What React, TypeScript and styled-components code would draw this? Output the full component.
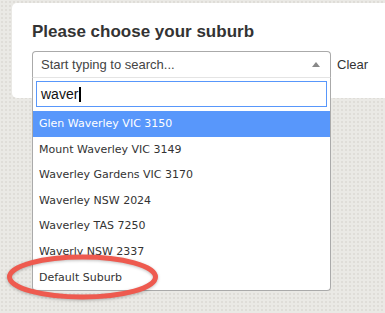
import React from 'react';
import styled, { createGlobalStyle } from 'styled-components';

const GlobalStyle = createGlobalStyle`
  html, body {
    margin: 0;
    padding: 0;
  }
  body {
    background-color: #eae9e5;
    background-image: radial-gradient(circle, #dfddd8 1px, transparent 1.2px);
    background-size: 4px 4px;
    font-family: "Liberation Sans", Arial, sans-serif;
    color: #333;
  }
`;

const suburbs = [
  'Glen Waverley VIC 3150',
  'Mount Waverley VIC 3149',
  'Waverley Gardens VIC 3170',
  'Waverley NSW 2024',
  'Waverley TAS 7250',
  'Waverly NSW 2337',
  'Default Suburb',
];

const Page = () => (
  <Wrapper>
    <Card>
      <Title>Please choose your suburb</Title>
      <SelectRow>
        <Select>
          <Chosen>
            <Placeholder>Start typing to search...</Placeholder>
            <Arrow />
          </Chosen>
          <Drop>
            <SearchBox>
              <SearchInput>
                waver<Caret />
              </SearchInput>
            </SearchBox>
            <Results>
              {suburbs.map((s, i) => (
                <Option key={s} active={i === 0}>
                  {s}
                </Option>
              ))}
            </Results>
          </Drop>
        </Select>
        <ClearLink>Clear</ClearLink>
      </SelectRow>
    </Card>
    {/* red highlight drawn over the last option */}
    <Circle width="170" height="54" viewBox="0 0 170 54">
      <ellipse cx="77.5" cy="25" rx="73" ry="20" fill="none" stroke="#ee5a4f" strokeWidth="5" />
    </Circle>
  </Wrapper>
);

const Wrapper = styled.div`
  position: relative;
  height: 313px;
  padding: 3px 0 0 12px;
  box-sizing: border-box;
  overflow: hidden;
`;

const Card = styled.div`
  background: #fff;
  border-radius: 5px 0 0 5px;
  height: 95px;
  padding: 19px 0 0 20px;
  box-sizing: border-box;
`;

const Title = styled.h2`
  margin: 0;
  font-size: 17px;
  line-height: 20px;
  font-weight: bold;
  color: #333;
`;

const SelectRow = styled.div`
  display: flex;
  align-items: center;
  gap: 6px;
  margin-top: 9px;
`;

const Select = styled.div`
  position: relative;
  width: 299px;
`;

const Chosen = styled.div`
  display: flex;
  align-items: center;
  justify-content: space-between;
  height: 27px;
  padding: 0 8px 0 8px;
  border: 1px solid #aaa;
  border-bottom-color: #e4e4e4;
  border-radius: 4px 4px 0 0;
  background: #fff;
  box-sizing: border-box;
`;

const Placeholder = styled.span`
  font-size: 13px;
  color: #444;
`;

const Arrow = styled.span`
  width: 0;
  height: 0;
  border-left: 4px solid transparent;
  border-right: 4px solid transparent;
  border-bottom: 5px solid #888;
  margin-right: 2px;
`;

const Drop = styled.div`
  position: absolute;
  top: 27px;
  left: 0;
  right: 0;
  background: #fff;
  border: 1px solid #aaa;
  border-top: none;
  border-radius: 0 0 4px 4px;
  z-index: 2;
`;

const SearchBox = styled.div`
  padding: 3px 3px 4px 3px;
`;

const SearchInput = styled.div`
  display: flex;
  align-items: center;
  height: 26px;
  padding: 0 4px;
  border: 1px solid #5897fb;
  box-sizing: border-box;
  font-size: 14px;
  color: #111;
`;

const Caret = styled.span`
  display: inline-block;
  width: 1.5px;
  height: 15px;
  margin-left: 1px;
  background: #000;
`;

const Results = styled.ul`
  list-style: none;
  margin: 0;
  padding: 0;
`;

const Option = styled.li<{ active?: boolean }>`
  height: 25.6px;
  line-height: 25.6px;
  padding-left: 6px;
  font-family: "DejaVu Sans", Verdana, sans-serif;
  font-size: 11px;
  color: ${p => (p.active ? '#fff' : '#333')};
  background: ${p => (p.active ? '#5897fb' : 'transparent')};
`;

const ClearLink = styled.span`
  font-size: 13px;
  color: #333;
`;

const Circle = styled.svg`
  position: absolute;
  left: 5px;
  top: 252px;
  z-index: 3;
  filter: drop-shadow(0 1px 1.5px rgba(0, 0, 0, 0.25));
`;

export default function App() {
  return (
    <>
      <GlobalStyle />
      <Page />
    </>
  );
}
